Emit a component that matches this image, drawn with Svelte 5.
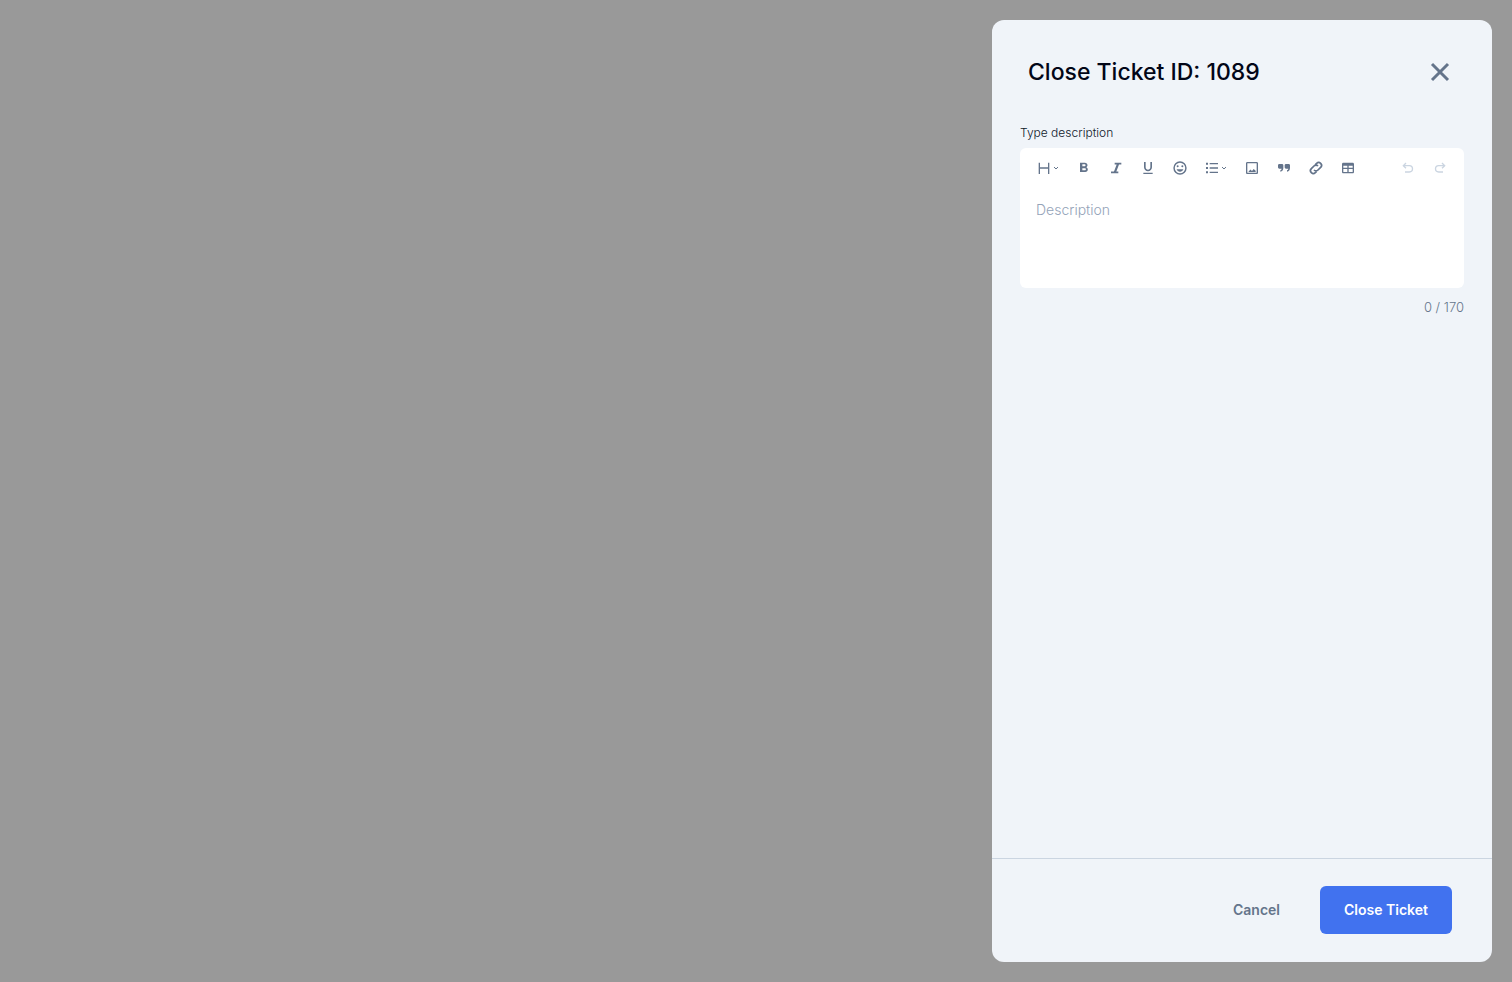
<script>

	// Initializations:
	const maxLength = 170;
	let description = '';

	// Toolbar icons, drawn on a 24 x 24 grid:
	const tools = [
		{ name: 'Heading', menu: true, line: 'M5 4v17M19 4v17M5 12h14' },
		{ name: 'Bold', fill: 'M15.6 10.79c.97-.67 1.65-1.77 1.65-2.79 0-2.26-1.75-4-4-4H6v14h8.04c2.09 0 3.71-1.7 3.71-3.79 0-1.52-.86-2.82-2.15-3.42zM9.5 6.5h3.3c.83 0 1.5.67 1.5 1.5s-.67 1.5-1.5 1.5H9.5zm3.8 9H9.5v-3h3.8c.83 0 1.5.67 1.5 1.5s-.67 1.5-1.5 1.5z' },
		{ name: 'Italic', fill: 'M10 4h10v2.6h-3.500L12.500 17.400h3V20H4.500v-2.600h4.500L13 6.600h-3z' },
		{ name: 'Underline', fill: 'M12 17c3.31 0 6-2.69 6-6V3h-2.5v8c0 1.93-1.57 3.5-3.5 3.5S8.5 12.93 8.5 11V3H6v8c0 3.31 2.69 6 6 6zm-7 2v2h14v-2z' },
		{ name: 'Emoji', fill: 'M12 2a10 10 0 1 0 0 20 10 10 0 0 0 0-20zm0 17.8a7.8 7.8 0 1 1 0-15.6 7.8 7.8 0 0 1 0 15.6zm3.5-8.8a1.5 1.5 0 1 0 0-3 1.5 1.5 0 0 0 0 3zm-7 0a1.5 1.5 0 1 0 0-3 1.5 1.5 0 0 0 0 3zm3.5 6.5c2.33 0 4.31-1.46 5.11-3.5H6.89c.8 2.04 2.78 3.5 5.11 3.5z' },
		{ name: 'List', menu: true, fill: 'M3 4h3v3H3zM3 10.5h3v3H3zM3 17h3v3H3zM8.5 4.5H21v2H8.5zM8.5 11H21v2H8.5zM8.5 17.5H21v2H8.5z' },
		{ name: 'Image', fill: 'M19 5v14H5V5zm0-2H5c-1.1 0-2 .9-2 2v14c0 1.1.9 2 2 2h14c1.1 0 2-.9 2-2V5c0-1.1-.9-2-2-2zm-4.5 10.5-2.5 3-2.5-2.2L6.5 18h11v-2z' },
		{ name: 'Quote', fill: 'M5 6h4c1.1 0 2 .9 2 2v4c0 3-1.500 5-4.500 5.500v-2.200c1.200-.3 1.800-1.100 2-2.300H5c-1.100 0-2-.9-2-2V8c0-1.100.9-2 2-2zM15 6h4c1.100 0 2 .9 2 2v4c0 3-1.500 5-4.500 5.500v-2.200c1.200-.3 1.800-1.100 2-2.300H15c-1.100 0-2-.9-2-2V8c0-1.100.9-2 2-2z' },
		{ name: 'Link', bold: true, line: 'M9 15a4.2 4.2 0 0 0 6 0l4-4a4.2 4.2 0 0 0-6-6l-2 2M15 9a4.2 4.2 0 0 0-6 0l-4 4a4.2 4.2 0 0 0 6 6l2-2' },
		{ name: 'Table', fill: 'M5 4h14c1.1 0 2 .9 2 2v12c0 1.1-.9 2-2 2H5c-1.1 0-2-.9-2-2V6c0-1.1.9-2 2-2zm0 4.500v3h6v-3zm8 0v3h6v-3zm-8 5V18h6v-4.500zm8 0V18h6v-4.500z' }
	];
	const history = [
		{ name: 'Undo', line: 'M9 4.500l-4 4 4 4M5 8.500h9a4.700 4.700 0 0 1 0 9.500H7.500' },
		{ name: 'Redo', line: 'M15 4.500l4 4-4 4M19 8.500h-9a4.700 4.700 0 0 0 0 9.500h6.500' }
	];

	// Function to empty the form:
	const reset = () => {
		description = '';
	}

</script>

<!-- #################################################################################################### -->

<div class="overlay">
	<div class="drawer" role="dialog" aria-modal="true" aria-labelledby="drawerTitle">

		<!-- Title & Close Button -->
		<header>
			<h1 id="drawerTitle">Close Ticket ID: 1089</h1>
			<button class="close" type="button" aria-label="Close" on:click={reset}>
				<svg viewBox="0 0 24 24" width="24" height="24"><path d="M4 4l16 16M20 4L4 20" /></svg>
			</button>
		</header>

		<!-- Description Editor -->
		<main>
			<label for="description">Type description</label>
			<div class="editor">
				<div class="toolbar" role="toolbar" aria-label="Formatting">
					{#each tools as tool}
						<button type="button" class="tool" class:menu={tool.menu} aria-label={tool.name}>
							<svg class="icon" viewBox="0 0 24 24">
								{#if tool.fill}
									<path class="fill" fill-rule="evenodd" d={tool.fill} />
								{:else}
									<path class="line" class:bold={tool.bold} d={tool.line} />
								{/if}
							</svg>
							{#if tool.menu}
								<svg class="chevron" viewBox="0 0 8 8"><path d="M2 3l2 2 2-2" /></svg>
							{/if}
						</button>
					{/each}
					<div class="history">
						{#each history as step}
							<button type="button" class="tool" aria-label={step.name} disabled>
								<svg class="icon" viewBox="0 0 24 24"><path class="line" d={step.line} /></svg>
							</button>
						{/each}
					</div>
				</div>
				<textarea id="description" placeholder="Description" maxlength={maxLength} bind:value={description}></textarea>
			</div>
			<p class="counter">{description.length} / {maxLength}</p>
		</main>

		<!-- Actions -->
		<footer>
			<button class="cancel" type="button" on:click={reset}>Cancel</button>
			<button class="submit" type="button">Close Ticket</button>
		</footer>
	</div>
</div>

<!-- #################################################################################################### -->

<style>

	:global(body) {
		margin: 0;
		background: #999999;
	}

	.overlay {
		box-sizing: border-box;
		display: flex;
		justify-content: flex-end;
		min-height: 100vh;
		padding: 20px;
		font-family: Inter, "Liberation Sans", sans-serif;
	}

	.drawer {
		display: flex;
		flex-direction: column;
		width: 100%;
		max-width: 500px;
		border-radius: 12px;
		background: #f0f4f9;
		overflow: hidden;
	}

	header {
		display: flex;
		align-items: center;
		justify-content: space-between;
		padding: 36px 36px 32px;
	}

	h1 {
		margin: 0;
		font-size: 23px;
		font-weight: 500;
		line-height: 32px;
		color: #020617;
	}

	button {
		border: none;
		background: none;
		font-family: inherit;
		cursor: pointer;
	}

	.close {
		display: flex;
		padding: 4px;
	}

	.close path {
		fill: none;
		stroke: #64748b;
		stroke-width: 3;
	}

	main {
		flex: 1;
		padding: 5px 28px;
	}

	label {
		display: block;
		margin-bottom: 7px;
		font-size: 12px;
		font-weight: 300;
		line-height: 16px;
		color: #0f172a;
	}

	.editor {
		border-radius: 6px;
		background: white;
	}

	.toolbar {
		display: flex;
		gap: 8px;
		padding: 8px 12px;
	}

	.tool {
		display: flex;
		align-items: center;
		justify-content: center;
		width: 24px;
		height: 24px;
		padding: 0;
		color: #64748b;
	}

	.menu {
		justify-content: flex-start;
		width: 32px;
		padding-left: 4px;
	}

	.tool:disabled {
		color: #cbd5e1;
		cursor: default;
	}

	.icon {
		width: 16px;
		height: 16px;
	}

	.chevron {
		width: 8px;
		height: 8px;
	}

	.fill {
		fill: currentColor;
	}

	.line, .chevron path {
		fill: none;
		stroke: currentColor;
		stroke-width: 2;
	}

	.bold {
		stroke-width: 2.5;
	}

	.chevron path {
		stroke-width: 1;
	}

	.history {
		display: flex;
		gap: 8px;
		margin-left: auto;
	}

	textarea {
		box-sizing: border-box;
		display: block;
		width: 100%;
		height: 100px;
		padding: 12px 16px;
		border: none;
		outline: none;
		resize: none;
		background: none;
		font-family: inherit;
		font-size: 14px;
		font-weight: 300;
		line-height: 20px;
		color: #1e293b;
	}

	textarea::placeholder {
		color: #94a3b8;
	}

	.counter {
		margin: 9px 0 0;
		font-size: 13px;
		font-weight: 300;
		line-height: 20px;
		text-align: right;
		color: #64748b;
	}

	footer {
		display: flex;
		justify-content: flex-end;
		gap: 16px;
		padding: 27px 40px 28px;
		border-top: 1px solid #cbd5e1;
	}

	footer button {
		height: 48px;
		padding: 0 24px;
		border-radius: 6px;
		font-size: 14px;
		font-weight: 600;
		line-height: 20px;
	}

	.cancel {
		color: #64748b;
	}

	.submit {
		color: white;
		background: #4172ef;
	}

</style>
